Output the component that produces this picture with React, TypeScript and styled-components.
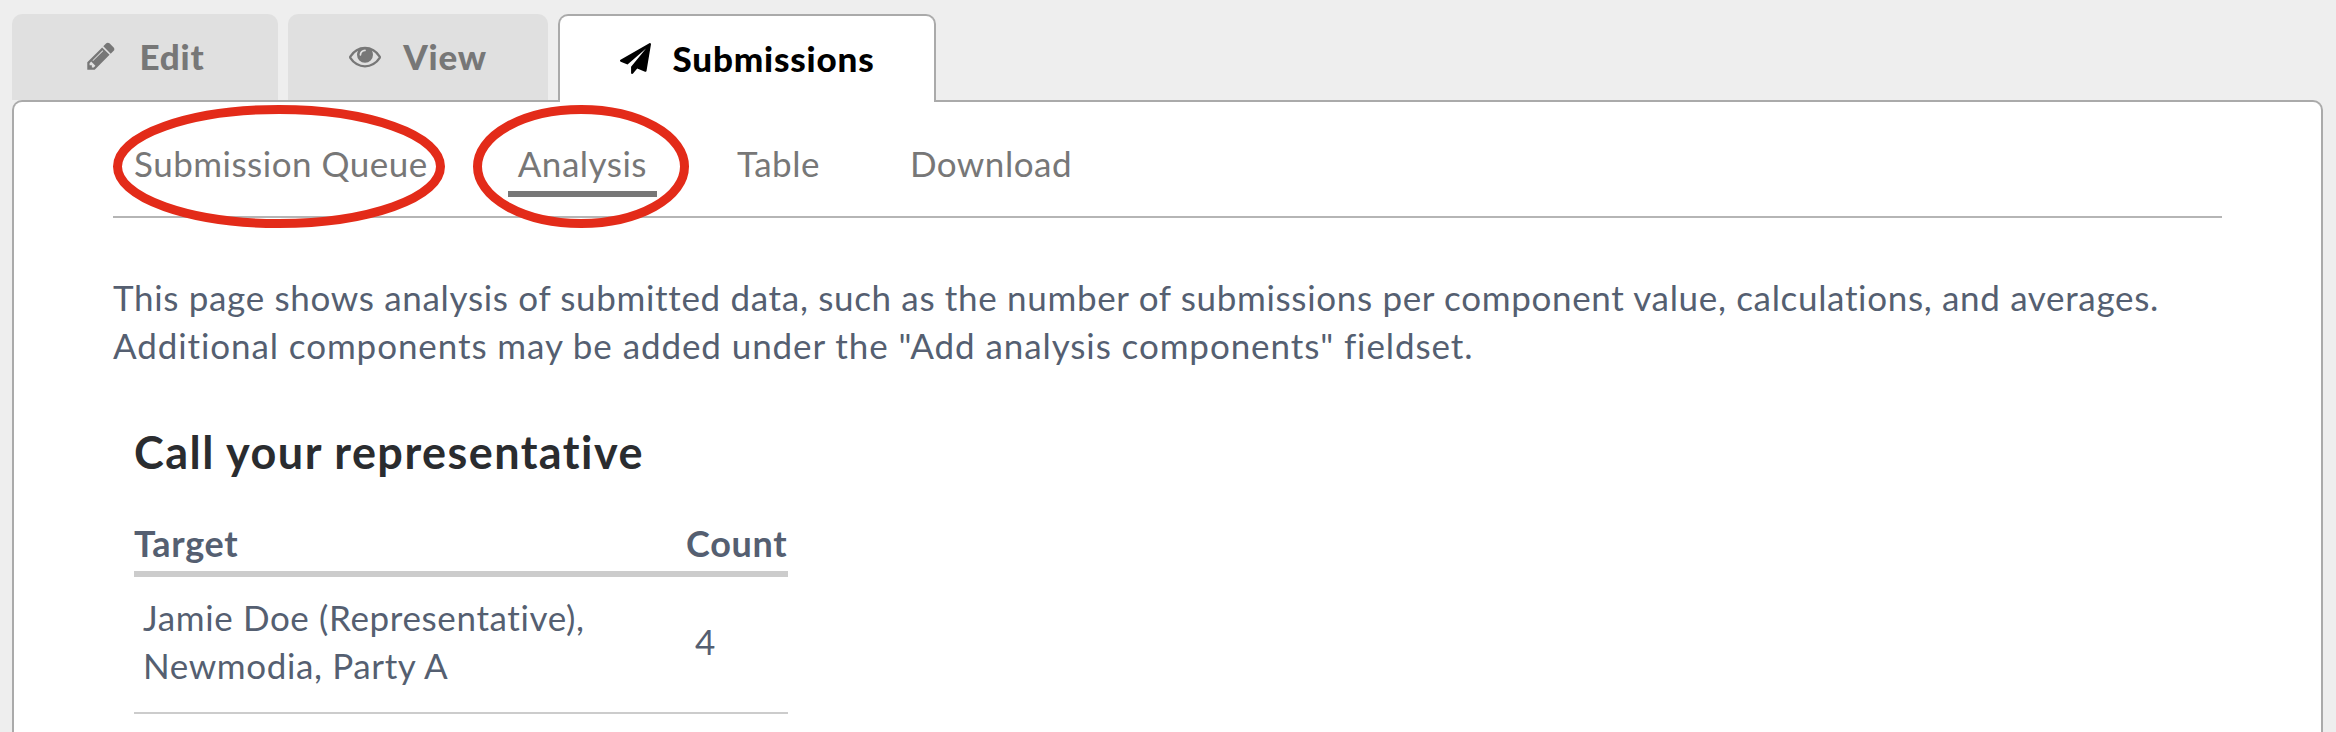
import React from "react";
import styled, { createGlobalStyle } from "styled-components";

const GlobalStyle = createGlobalStyle`
  html, body {
    margin: 0;
    height: 100%;
    overflow: hidden;
    background: #eeeeee;
  }
  body {
    font-family: "Lato", "Liberation Sans", sans-serif;
  }
`;

const ICONS = {
  pencil:
    "M491 1536l91-91-235-235-91 91v107h128v128h107zm523-928q0-22-22-22-10 0-17 7l-542 542q-7 7-7 17 0 22 22 22 10 0 17-7l542-542q7-7 7-17zm-54-192l416 416-832 832h-416v-416zm683 96q0 53-37 90l-166 166-416-416 166-165q36-38 90-38 53 0 91 38l235 234q37 39 37 91z",
  eye: "M1664 960q-152-236-381-353 61 104 61 225 0 185-131.5 316.5t-316.5 131.5-316.5-131.5-131.5-316.5q0-121 61-225-229 117-381 353 133 205 333.5 326.5t434.5 121.5 434.5-121.5 333.5-326.5zm-720-384q0-20-14-34t-34-14q-125 0-214.5 89.5t-89.5 214.5q0 20 14 34t34 14 34-14 14-34q0-86 61-147t147-61q20 0 34-14t14-34zm848 384q0 34-20 69-140 230-376.5 368.5t-499.5 138.5-499.5-139-376.5-368q-20-35-20-69t20-69q140-229 376.5-368t499.5-139 499.5 139 376.5 368q20 35 20 69z",
  send: "M1764 11q33 24 27 64l-256 1536q-5 29-32 45-14 8-31 8-11 0-24-5l-453-185-242 295q-18 23-49 23-13 0-22-4-19-7-30.5-23.5t-11.5-36.5v-349l864-1059-1069 925-395-162q-37-14-40-55-2-40 32-59l1664-960q15-9 32-9 20 0 36 11z",
};

const Icon = ({ name, size }: { name: keyof typeof ICONS; size: number }) => (
  <svg viewBox="0 0 1792 1792" width={size} height={size} fill="currentColor">
    <path d={ICONS[name]} />
  </svg>
);

const Page = styled.div`
  position: relative;
  height: 732px;
  padding: 14px 13px 0 12px;
  box-sizing: border-box;
  background: #eeeeee;
  overflow: hidden;
`;

const TabRow = styled.div`
  display: flex;
  gap: 10px;
  height: 86px;
  position: relative;
  z-index: 1;
`;

const Tab = styled.a<{ $active?: boolean; $width: number }>`
  display: flex;
  align-items: center;
  justify-content: center;
  gap: 22px;
  box-sizing: border-box;
  width: ${(p) => p.$width}px;
  height: ${(p) => (p.$active ? 88 : 86)}px;
  padding-bottom: 2px;
  border-radius: 10px 10px 0 0;
  background: ${(p) => (p.$active ? "#ffffff" : "#e0e0e0")};
  border: ${(p) => (p.$active ? "2px solid #aaaaaa" : "none")};
  border-bottom: none;
  color: ${(p) => (p.$active ? "#000000" : "#777777")};
  font-size: 35px;
  letter-spacing: 0.8px;
  font-weight: 900;
  svg {
    flex: none;
  }
`;

const Panel = styled.div`
  box-sizing: border-box;
  height: 632px;
  padding: 0 99px;
  background: #ffffff;
  border: 2px solid #aaaaaa;
  border-bottom: none;
  border-radius: 10px 10px 0 0;
`;

const SubNav = styled.nav`
  display: flex;
  gap: 70px;
  height: 116px;
  box-sizing: border-box;
  padding: 39px 0 0 11px;
  border-bottom: 2px solid #b5b5b5;
`;

const SubLink = styled.a<{ $active?: boolean }>`
  box-sizing: border-box;
  height: 56px;
  padding: 0 10px;
  line-height: 45px;
  font-size: 35px;
  letter-spacing: 0.5px;
  color: #777777;
  border-bottom: 6px solid ${(p) => (p.$active ? "#777777" : "transparent")};
`;

const Intro = styled.p`
  margin: 55px 0 0;
  font-size: 35px;
  letter-spacing: 0.67px;
  line-height: 48px;
  color: #555f71;
`;

const IntroWide = styled.span`
  letter-spacing: 0.91px;
`;

const Section = styled.section`
  margin-left: 21px;
`;

const Heading = styled.h2`
  margin: 55px 0 0;
  font-size: 45px;
  letter-spacing: 1.45px;
  line-height: 56px;
  font-weight: 700;
  color: #2a2c2f;
`;

const Table = styled.table`
  width: 654px;
  margin-top: 40px;
  border-collapse: collapse;
  color: #555f71;
  font-size: 35px;
  letter-spacing: 0.63px;
`;

const HeadCell = styled.th<{ $width?: number }>`
  padding: 0 0 6px;
  height: 54px;
  width: ${(p) => (p.$width ? `${p.$width}px` : "auto")};
  box-sizing: border-box;
  text-align: left;
  font-size: 36px;
  letter-spacing: 0.7px;
  font-weight: 700;
  border-bottom: 6px solid #cccccc;
`;

const Cell = styled.td`
  padding: 16px 9px 23px;
  line-height: 48px;
  border-bottom: 2px solid #cccccc;
`;

const Annotation = styled.svg`
  position: absolute;
  top: 0;
  left: 0;
  z-index: 2;
  pointer-events: none;
`;

export default function App() {
  return (
    <>
      <GlobalStyle />
      <Page>
        <TabRow>
          <Tab $width={266}>
            <Icon name="pencil" size={32} />
            Edit
          </Tab>
          <Tab $width={260}>
            <Icon name="eye" size={32} />
            View
          </Tab>
          <Tab $width={378} $active>
            <Icon name="send" size={31} />
            Submissions
          </Tab>
        </TabRow>
        <Panel>
          <SubNav>
            <SubLink>Submission Queue</SubLink>
            <SubLink $active>Analysis</SubLink>
            <SubLink>Table</SubLink>
            <SubLink>Download</SubLink>
          </SubNav>
          <Intro>
            This page shows analysis of submitted data, such as the number of submissions per component value, calculations, and averages.
            <br />
            <IntroWide>Additional components may be added under the "Add analysis components" fieldset.</IntroWide>
          </Intro>
          <Section>
            <Heading>Call your representative</Heading>
            <Table>
              <thead>
                <tr>
                  <HeadCell>Target</HeadCell>
                  <HeadCell $width={102}>Count</HeadCell>
                </tr>
              </thead>
              <tbody>
                <tr>
                  <Cell>
                    Jamie Doe (Representative),
                    <br />
                    Newmodia, Party A
                  </Cell>
                  <Cell>4</Cell>
                </tr>
              </tbody>
            </Table>
          </Section>
        </Panel>
        <Annotation width="2336" height="732" fill="none" stroke="#e32b19" strokeWidth="9">
          <ellipse cx="279" cy="166.5" rx="161.5" ry="57" />
          <ellipse cx="581" cy="166.5" rx="103.5" ry="57" />
        </Annotation>
      </Page>
    </>
  );
}
